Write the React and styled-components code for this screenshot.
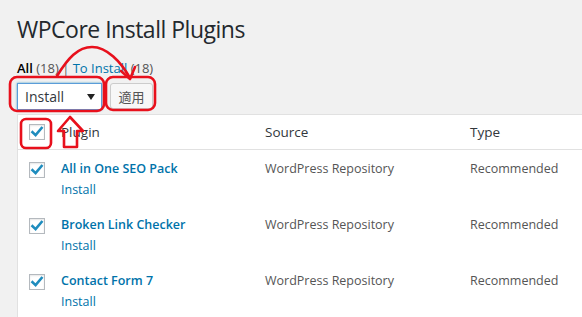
import React from "react";
import styled, { createGlobalStyle } from "styled-components";

const Global = createGlobalStyle`
  html, body { margin: 0; padding: 0; background: #f1f1f1; overflow: hidden; }
  body { font-family: "Open Sans", "Noto Sans", sans-serif; font-size: 13px; color: #444; }
`;

const Page = styled.div`
  position: relative;
  width: 582px;
  height: 317px;
  padding-left: 17px;
  box-sizing: border-box;
  overflow: hidden;
`;

const Title = styled.h1`
  margin: 0;
  padding: 15px 0 0;
  font-size: 23px;
  font-weight: 400;
  line-height: 29px;
  letter-spacing: -0.5px;
  color: #23282d;
`;

const Filters = styled.div`
  margin-top: 16px;
  font-size: 13px;
  line-height: 16px;
  color: #666;
`;

const Current = styled.span`
  color: #000;
  font-weight: 600;
`;

const Count = styled.span`
  color: #555;
`;

const FilterLink = styled.span`
  color: #0073aa;
`;

const Actions = styled.div`
  display: flex;
  gap: 8px;
  margin-top: 7px;
`;

const Select = styled.div`
  width: 85px;
  height: 27px;
  box-sizing: border-box;
  border: 1px solid #5b9dd9;
  box-shadow: 0 0 2px rgba(30, 140, 190, 0.8);
  background: #fff;
  display: flex;
  align-items: center;
  justify-content: space-between;
  padding: 0 6px 0 7px;
  font-size: 14px;
  color: #32373c;
`;

const Button = styled.div`
  width: 43px;
  height: 26px;
  box-sizing: border-box;
  border: 1px solid #ccc;
  border-radius: 3px;
  background: #f7f7f7;
  box-shadow: 0 1px 0 #ccc;
  display: flex;
  align-items: center;
  justify-content: center;
  font-family: "Noto Sans CJK JP", sans-serif;
  font-size: 13px;
  color: #555;
`;

const Table = styled.div`
  margin-top: 4px;
  width: 620px;
  background: #fff;
  border: 1px solid #e1e1e1;
  border-right: none;
`;

const Row = styled.div`
  display: grid;
  grid-template-columns: 43px 204px 205px 1fr;
  border-bottom: ${(p) => (p.$head ? "1px solid #e1e1e1" : "none")};
  height: ${(p) => (p.$head ? "35px" : "56px")};
  box-sizing: border-box;
  padding-top: ${(p) => (p.$head ? "0" : "9px")};
  align-items: ${(p) => (p.$head ? "center" : "start")};
`;

const CheckCell = styled.div`
  padding-left: 11px;
  padding-top: ${(p) => (p.$head ? "0" : "3px")};
  display: flex;
`;

const Box = styled.div`
  width: 16px;
  height: 16px;
  box-sizing: border-box;
  border: 1px solid #b4b9be;
  background: #fff;
  box-shadow: inset 0 1px 2px rgba(0, 0, 0, 0.1);
  display: flex;
  align-items: center;
  justify-content: center;
`;

const HeadText = styled.div`
  font-size: 13.5px;
  color: #32373c;
`;

const PluginName = styled.div`
  font-size: 12.5px;
  line-height: 19px;
  font-weight: 600;
  color: #0073aa;
`;

const InstallLink = styled.div`
  margin-top: 2px;
  font-size: 12.5px;
  line-height: 19px;
  color: #0073aa;
`;

const Cell = styled.div`
  font-size: 12.5px;
  line-height: 19px;
  color: #555;
`;

const Overlay = styled.svg`
  position: absolute;
  left: 0;
  top: 0;
  pointer-events: none;
`;

const Check = () => (
  <svg width="14" height="14" viewBox="0 0 14 14">
    <path d="M2.5 7.2 L5.6 10.2 L11.6 3" fill="none" stroke="#1e8cbe" strokeWidth="2.6" strokeLinecap="square" />
  </svg>
);

const CheckBox = ({ head }) => (
  <CheckCell $head={head}>
    <Box>
      <Check />
    </Box>
  </CheckCell>
);

const plugins = ["All in One SEO Pack", "Broken Link Checker", "Contact Form 7"];

export default function App() {
  return (
    <>
      <Global />
      <Page>
        <Title>WPCore Install Plugins</Title>
        <Filters>
          <Current>All</Current> <Count>(18)</Count> | <FilterLink>To Install</FilterLink> <Count>(18)</Count>
        </Filters>
        <Actions>
          <Select>
            <span>Install</span>
            <svg width="8" height="6" viewBox="0 0 8 6">
              <path d="M0 0 H8 L4 6 Z" fill="#222" />
            </svg>
          </Select>
          <Button>適用</Button>
        </Actions>
        <Table>
          <Row $head>
            <CheckBox head />
            <HeadText>Plugin</HeadText>
            <HeadText>Source</HeadText>
            <HeadText>Type</HeadText>
          </Row>
          {plugins.map((name) => (
            <Row key={name}>
              <CheckBox />
              <div>
                <PluginName>{name}</PluginName>
                <InstallLink>Install</InstallLink>
              </div>
              <Cell>WordPress Repository</Cell>
              <Cell>Recommended</Cell>
            </Row>
          ))}
        </Table>
        <Overlay width="582" height="317" viewBox="0 0 582 317">
          <g fill="none" stroke="#e8101c" strokeWidth="2.6" strokeLinejoin="round" strokeLinecap="round">
            <rect x="10" y="77" width="94" height="34" rx="7" />
            <rect x="106" y="77" width="49" height="33" rx="7" />
            <rect x="21" y="119" width="30" height="29" rx="5" />
            <path d="M57 76 C68 58 78 47 92 47 C107 47 121 62 130 78" />
            <path d="M121 71 L130 79 L135 67" />
            <path d="M70 117 L58 131 L64 131 L64 147 L77 147 L77 131 L83 131 Z" />
          </g>
        </Overlay>
      </Page>
    </>
  );
}
